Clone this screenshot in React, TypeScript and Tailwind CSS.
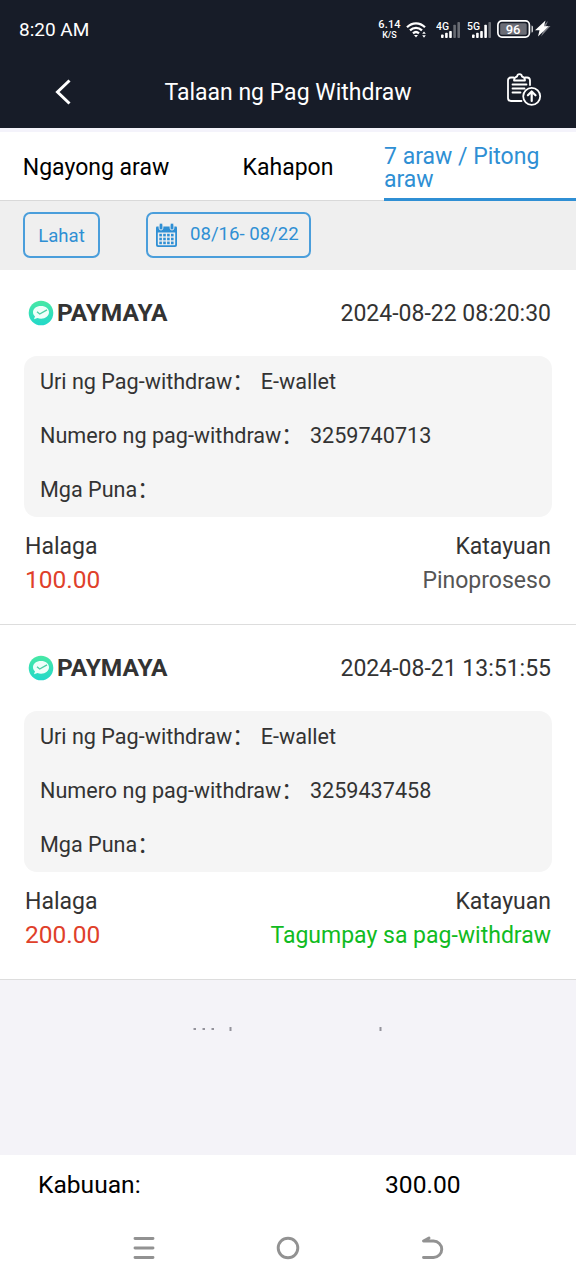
import { useState } from 'react';

const tabs = ['Ngayong araw', 'Kahapon', '7 araw / Pitong araw'];

// Withdrawal records
const records = [
  {
    id: 1,
    date: '2024-08-22 08:20:30',
    number: '3259740713',
    amount: '100.00',
    status: 'Pinoproseso',
    statusClass: 'text-[#555555]',
  },
  {
    id: 2,
    date: '2024-08-21 13:51:55',
    number: '3259437458',
    amount: '200.00',
    status: 'Tagumpay sa pag-withdraw',
    statusClass: 'text-[#11bb22]',
  },
];

function Signal({ label, bars }: { label: string; bars: number }) {
  return (
    <svg width="26" height="20" viewBox="0 0 26 20" fill="#fff">
      <text x="0" y="10" fontSize="11" fontWeight="500" textLength="13" lengthAdjust="spacingAndGlyphs">{label}</text>
      {[0, 1, 2, 3, 4].map((i) => (
        <rect
          key={i}
          x={5 + i * 4.1}
          y={i < 3 ? 14.5 - i * 1.8 : 13.5 - i * 2.9}
          width="2.6"
          height={i < 3 ? 3.5 + i * 1.8 : 4.5 + i * 2.9}
          rx="0.8"
          opacity={i < bars ? 1 : 0.35}
        />
      ))}
    </svg>
  );
}

function StatusBar() {
  return (
    <div className="flex h-[57px] items-center justify-between pl-[19px] pr-[25px] pt-[2px] text-white">
      <span className="pt-[2px] text-[19px]">8:20 AM</span>
      <div className="flex items-center">
        <div className="flex w-[23px] flex-col items-center text-[11px] font-medium leading-[10px]">
          <span className="tracking-[0.2px]">6.14</span>
          <span className="text-[9px]">K/S</span>
        </div>
        <svg className="ml-[5px]" width="21" height="18" viewBox="0 0 21 18" fill="none" stroke="#fff" strokeWidth="2.2">
          <path d="M1 6.2C6.2 1 13.8 1 19 6.2" />
          <path d="M4 9.4c3.5-3.4 8.5-3.4 12 0" />
          <path d="M7 12.4c1.8-1.7 4.2-1.7 6 0" />
          <path d="M8 14l2 2.5 2-2.5z" fill="#fff" stroke="none" />
          <path d="M16.2 12.8l1.8-2.4 1.8 2.4zM16.2 14.3l1.8 2.4 1.8-2.4z" fill="#fff" stroke="none" />
        </svg>
        <div className="ml-[9px]"><Signal label="4G" bars={3} /></div>
        <div className="ml-[5px]"><Signal label="5G" bars={4} /></div>
        <svg className="-mt-[1px] ml-[4px]" width="37" height="18" viewBox="0 0 37 18">
          <rect x="0.9" y="0.9" width="31.5" height="16.2" rx="4" fill="none" stroke="#fff" strokeWidth="1.7" />
          <rect x="3.2" y="3.2" width="26.5" height="11.6" rx="1.5" fill="#6b6d76" />
          <path d="M34.6 5.5q1.2 0 1.2 1.5v4q0 1.500-1.2 1.500z" fill="#fff" />
          <text x="8.7" y="13.6" fontSize="13" fontWeight="500" fill="#fff">96</text>
        </svg>
        <svg className="-mt-[2px] ml-[1px]" width="16" height="17" viewBox="0 0 16 17">
          <path d="M13 1L5 9h4l-3 7.500 9.500-10.500h-4.500z" fill="#7d7f87" />
          <path d="M10.500 0.500L0 10.200h4.500L3 16.500 13.500 6.300h-4.500z" fill="#fff" />
        </svg>
      </div>
    </div>
  );
}

function Header() {
  return (
    <div className="flex h-[71px] items-center pl-[54px] pr-[34px] text-white">
      <svg className="-mt-[1px]" width="18" height="26" viewBox="0 0 18 26" fill="none" stroke="#fff" strokeWidth="3">
        <path d="M15.5 1.500L3.500 13l12 11.500" />
      </svg>
      <h1 className="flex-1 pr-[2px] pt-[2px] text-center text-[23px]">Talaan ng Pag Withdraw</h1>
      <svg className="-mt-[7px]" width="36" height="35" viewBox="0 0 36 35" fill="none" stroke="#fff" strokeWidth="1.8" strokeLinecap="round" strokeLinejoin="round">
        <path d="M7.500 5.500H5a3 3 0 0 0-3 3V26a3 3 0 0 0 3 3h10.500M19 5.500h2a3 3 0 0 1 3 3v4.500" />
        <path d="M8 8.500c0-2.500 1-3.500 3-3.800 0-3.500 5-3.500 5 0 2 .3 3 1.300 3 3.800z" />
        <path d="M6.500 12.500h14M6.500 16.500h12M6.500 20.500h8" />
        <circle cx="25.700" cy="24.300" r="8.500" />
        <path d="M25.700 29v-9M21.900 23.300l3.800-3.800 3.800 3.800" strokeWidth="2.2" />
      </svg>
    </div>
  );
}

function CalendarIcon() {
  return (
    <svg width="23" height="25" viewBox="0 0 23 25">
      <path d="M1 4.500q0-1 1-1h19q1 0 1 1V22q0 2-2 2H3q-2 0-2-2z" fill="#2f8fd4" />
      <path d="M2.800 9.500h17.400V21.500q0 .8-.8.800H3.600q-.8 0-.8-.8z" fill="#efefef" />
      {[6, 17].map((x) => (
        <rect key={x} x={x - 1.9} y="0" width="3.8" height="7" rx="1.9" fill="#2f8fd4" stroke="#efefef" strokeWidth="0.9" />
      ))}
      {[0, 1, 2].map((row) =>
        [0, 1, 2, 3].map((col) => (
          <rect key={`${row}-${col}`} x={4.3 + col * 3.9} y={10.8 + row * 3.9} width="2.6" height="2.6" fill="#2f8fd4" />
        ))
      )}
    </svg>
  );
}

function MayaLogo() {
  return (
    <svg width="26" height="26" viewBox="0 0 26 26">
      <defs>
        <linearGradient id="maya" x1="0" y1="0" x2="0" y2="1">
          <stop offset="0" stopColor="#48e8a4" />
          <stop offset="1" stopColor="#22d8ca" />
        </linearGradient>
      </defs>
      <circle cx="13" cy="13" r="12.3" fill="url(#maya)" />
      <path d="M13 6c4.700 0 8 2.700 8 6.300s-3.300 6.400-8 6.400c-1.300 0-2.500-.2-3.500-.6L6 19.300l1-3c-1.300-1-2-2.400-2-4C5 8.700 8.300 6 13 6z" fill="#effffa" />
      <path d="M9 11.800l2.700 2.200 7.300-4.200" fill="none" stroke="#4ccfa4" strokeWidth="1.4" />
    </svg>
  );
}

function Field({ label, value }: { label: string; value?: string }) {
  return (
    <div className="flex h-[54px] items-center">
      <span>{label}：</span>
      {value && <span className="ml-[7px]">{value}</span>}
    </div>
  );
}

export default function App() {
  const [activeTab, setActiveTab] = useState(2);

  return (
    <div className="flex h-[1280px] w-[576px] flex-col overflow-hidden bg-[#f4f3f8] font-['Roboto','Noto_Sans_CJK_SC',sans-serif]">
      <div className="h-[128px] shrink-0 bg-[#171c28]">
        <StatusBar />
        <Header />
      </div>

      {/* Tabs */}
      <div className="flex h-[73px] shrink-0 border-t-4 border-[#f4f3fb] bg-white">
        {tabs.map((tab, index) => (
          <button
            key={tab}
            onClick={() => setActiveTab(index)}
            className={`flex w-1/3 items-center border-b text-[23px] leading-[23px] ${
              index === activeTab
                ? 'border-b-[3px] border-b-[#2f8fd4] pt-[5px] text-left text-[#2f8fd4]'
                : 'justify-center border-b-[#d9d9d9] pt-[3px] text-black'
            }`}
          >
            {tab}
          </button>
        ))}
      </div>

      {/* Filters */}
      <div className="flex h-[69px] shrink-0 gap-[46px] bg-[#efefef] pl-[23px] pt-[11px] text-[18.6px] text-[#2f8fd4]">
        <button className="flex h-[46px] w-[77px] items-center justify-center rounded-[7px] border-2 border-[#4a9edb] pt-[3px]">
          Lahat
        </button>
        <button className="flex h-[46px] w-[165px] items-center rounded-[7px] border-2 border-[#4a9edb] pl-[7px]">
          <CalendarIcon />
          <span className="ml-[12px] whitespace-nowrap">08/16- 08/22</span>
        </button>
      </div>

      {/* Records */}
      {records.map((record) => (
        <div key={record.id} className="h-[355px] shrink-0 border-b border-[#dddddd] bg-white px-[25px] text-[23px] text-[#333333]">
          <div className="flex h-[86px] items-center justify-between pl-[3px]">
            <div className="flex items-center gap-[3px]">
              <MayaLogo />
              <span className="text-[24.5px] font-bold">PAYMAYA</span>
            </div>
            <span className="pt-[3px]">{record.date}</span>
          </div>
          <div className="-mx-[1px] h-[161px] overflow-hidden rounded-[13px] bg-[#f5f5f5] pl-[16px] text-[21.6px]">
            <div className="-mt-[1px]">
              <Field label="Uri ng Pag-withdraw" value="E-wallet" />
              <Field label="Numero ng pag-withdraw" value={record.number} />
              <Field label="Mga Puna" />
            </div>
          </div>
          <div className="mt-[13px] flex justify-between leading-[34px]">
            <div>
              <div>Halaga</div>
              <div className="-mt-[1px] text-[24.5px] text-[#e0402a]">{record.amount}</div>
            </div>
            <div className="text-right">
              <div>Katayuan</div>
              <div className={record.statusClass}>{record.status}</div>
            </div>
          </div>
        </div>
      ))}

      {/* Clipped loading hint */}
      <div className="h-[175px] shrink-0 pt-[46px]">
        <svg width="576" height="6" viewBox="0 0 576 6" fill="#94939c">
          <rect x="193.500" y="2" width="2.5" height="2" />
          <rect x="202.500" y="2" width="2.5" height="2" />
          <rect x="211.500" y="2" width="2.5" height="2" />
          <rect x="229.500" y="1" width="2" height="4" />
          <rect x="379.500" y="1" width="2" height="4" />
        </svg>
      </div>

      <div className="flex flex-1 flex-col bg-white">
        <div className="flex h-[60px] items-center pl-[38px] text-[24.6px] text-black">
          <span className="w-[347px]">Kabuuan:</span>
          <span>300.00</span>
        </div>
        {/* System navigation */}
        <div className="flex h-[66px] items-center justify-between px-[132px]">
          <svg width="24" height="24" viewBox="0 0 24 24" stroke="#929292" strokeWidth="2.9" strokeLinecap="round">
            <path d="M3 2.500h18M3 12h18M3 21.500h18" />
          </svg>
          <svg width="24" height="24" viewBox="0 0 24 24" fill="none" stroke="#929292" strokeWidth="2.9">
            <circle cx="12" cy="12" r="9.8" />
          </svg>
          <svg width="24" height="24" viewBox="0 0 24 24" fill="none" stroke="#929292" strokeWidth="2.9" strokeLinecap="round" strokeLinejoin="round">
            <path d="M9 2L3.500 5H13.500a8.200 8.200 0 0 1 0 16.500H3.500" />
          </svg>
        </div>
      </div>
    </div>
  );
}
